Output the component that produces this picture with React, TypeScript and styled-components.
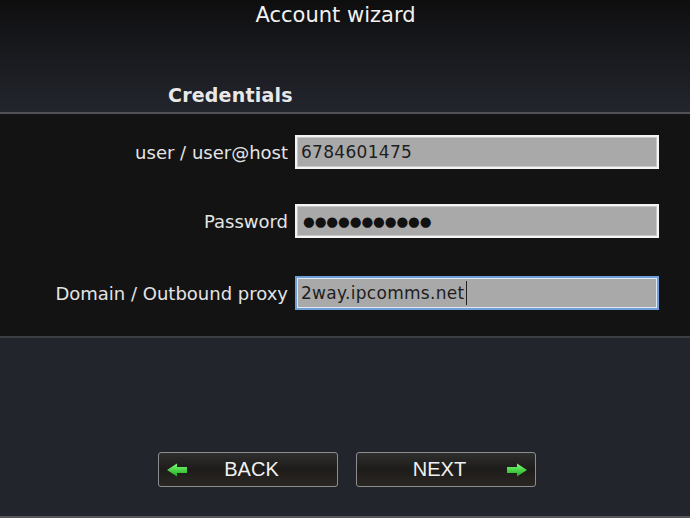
import React from "react";
import styled, { createGlobalStyle } from "styled-components";

const Global = createGlobalStyle`
  html, body { margin: 0; padding: 0; background: #23252c; }
  body { font-family: "DejaVu Sans", "Liberation Sans", sans-serif; }
  #root { width: 690px; height: 518px; }
`;

const Page = styled.div`
  width: 690px;
  height: 518px;
  display: flex;
  flex-direction: column;
  overflow: hidden;
`;

const Header = styled.header`
  height: 114px;
  background: linear-gradient(180deg, #0e0e0f 0%, #17181c 40%, #23252d 100%);
  border-bottom: 2px solid #505256;
  display: flex;
  flex-direction: column;
  box-sizing: border-box;
  padding-top: 3px;
`;

const Title = styled.h1`
  margin: 0;
  text-align: center;
  font-family: "DejaVu Sans", sans-serif;
  font-weight: normal;
  font-size: 21px;
  color: #f2f2f2;
  padding-right: 19px;
`;

const Section = styled.h2`
  margin: 57px 0 0 168px;
  font-family: "DejaVu Sans", sans-serif;
  font-weight: bold;
  font-size: 19px;
  color: #e8e8e8;
  letter-spacing: 0.2px;
`;

const FormPanel = styled.section`
  height: 224px;
  background: #131313;
  border-bottom: 2px solid #3c3e42;
  box-sizing: border-box;
  padding-top: 21px;
  display: flex;
  flex-direction: column;
  gap: 35px;
`;

const Row = styled.div<{ $offset?: number }>`
  display: grid;
  grid-template-columns: 288px 364px;
  column-gap: 7px;
  align-items: center;
  margin-top: ${(p) => p.$offset ?? 0}px;
`;

const Label = styled.label`
  text-align: right;
  font-family: "DejaVu Sans", sans-serif;
  font-size: 18px;
  color: #e4e4e4;
`;

const Field = styled.div<{ $focused?: boolean }>`
  height: 34px;
  box-sizing: border-box;
  background: #a9a9a9;
  border: 2px solid ${(p) => (p.$focused ? "#6f9fd6" : "#f4f4f4")};
  box-shadow: ${(p) => (p.$focused ? "inset 0 0 0 1px #dfe9f5" : "inset 0 0 0 1px #c8c8c8")};
  display: flex;
  align-items: center;
  padding-left: 4px;
  font-family: "DejaVu Sans", sans-serif;
  font-size: 17px;
  color: #1e1e1e;
  letter-spacing: 0.3px;
`;

const Dots = styled.span`
  font-size: 13.5px;
  letter-spacing: -0.1px;
  color: #111;
  padding-left: 2px;
`;

const Caret = styled.span`
  display: inline-block;
  width: 1px;
  height: 24px;
  background: #222;
  margin-left: 1px;
`;

const Footer = styled.footer`
  flex: 1;
  background: #23252c;
  border-bottom: 2px solid #55575b;
  display: flex;
  justify-content: center;
  align-items: flex-end;
  gap: 18px;
  padding-bottom: 29px;
  padding-left: 3px;
`;

const Button = styled.button`
  width: 180px;
  height: 35px;
  box-sizing: border-box;
  border: 1px solid #8d8d8f;
  border-radius: 3px;
  background: linear-gradient(180deg, #2e2e2e 0%, #1e1c1a 50%, #2a2622 100%);
  display: flex;
  align-items: center;
  padding: 0 6px;
  color: #f0f0f0;
  font-family: "Liberation Sans", sans-serif;
  font-size: 20px;
  cursor: pointer;
`;

const ButtonText = styled.span<{ $shift: number }>`
  flex: 1;
  text-align: center;
  transform: translateX(${(p) => p.$shift}px);
`;

const Arrow = ({ dir }: { dir: "left" | "right" }) => (
  <svg width="24" height="16" viewBox="0 0 24 16" style={{ transform: dir === "left" ? "scaleX(-1)" : undefined }}>
    <defs>
      <linearGradient id={`g-${dir}`} x1="0" y1="0" x2="0" y2="1">
        <stop offset="0" stopColor="#7dff7a" />
        <stop offset="1" stopColor="#1ea71e" />
      </linearGradient>
    </defs>
    <path d="M2 5 H12 V1.5 L22 8 L12 14.5 V11 H2 Z" fill={`url(#g-${dir})`} />
  </svg>
);

export default function App() {
  return (
    <Page>
      <Global />
      <Header>
        <Title>Account wizard</Title>
        <Section>Credentials</Section>
      </Header>
      <FormPanel>
        <Row>
          <Label>user / user@host</Label>
          <Field>6784601475</Field>
        </Row>
        <Row>
          <Label>Password</Label>
          <Field>
            <Dots>●●●●●●●●●●●</Dots>
          </Field>
        </Row>
        <Row $offset={3}>
          <Label>Domain / Outbound proxy</Label>
          <Field $focused>
            2way.ipcomms.net
            <Caret />
          </Field>
        </Row>
      </FormPanel>
      <Footer>
        <Button>
          <Arrow dir="left" />
          <ButtonText $shift={-8}>BACK</ButtonText>
        </Button>
        <Button>
          <ButtonText $shift={6}>NEXT</ButtonText>
          <Arrow dir="right" />
        </Button>
      </Footer>
    </Page>
  );
}
